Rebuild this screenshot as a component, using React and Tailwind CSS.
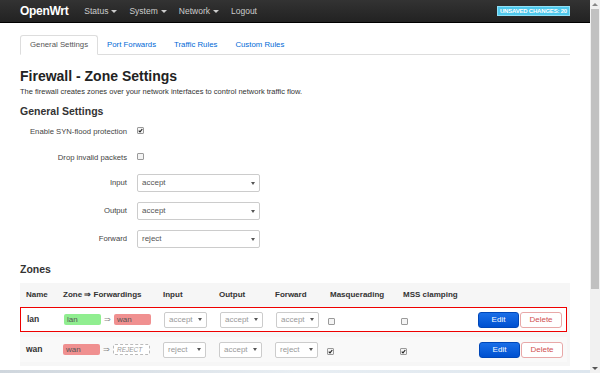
import React from "react";

const font = { fontFamily: '"Liberation Sans", Arial, sans-serif' };

function Caret() {
  return <span className="inline-block ml-[3px] align-middle border-t-[3px] border-t-current border-x-[3px] border-x-transparent w-0 h-0" />;
}

function Check({ checked }) {
  return (
    <span className="inline-flex items-center justify-center w-[7px] h-[7px] border border-[#9a9a9a] rounded-[1px] bg-[#f4f4f4]">
      {checked && (
        <svg width="7" height="7" viewBox="0 0 7 7">
          <path d="M1 3.6 L2.8 5.4 L6 1.4" stroke="#222" strokeWidth="1.6" fill="none" />
        </svg>
      )}
    </span>
  );
}

function Select({ value, className = "", muted }) {
  return (
    <div className={`flex items-center justify-between border border-[#ccc] rounded-[2px] bg-white px-[4px] text-[8px] ${muted ? "text-[#999]" : "text-[#555]"} ${className}`}>
      <span>{value}</span>
      <span className="inline-block border-t-[3px] border-t-[#555] border-x-[2px] border-x-transparent w-0 h-0" />
    </div>
  );
}

function Row({ name, zone, zoneColor, fwd, fwdColor, reject, vals, masq, mss, highlight }) {
  return (
    <div className={`flex items-center h-[25px] ${highlight ? "border border-[#e00] bg-white" : "bg-[#f9f9f9] mt-[5px]"}`}>
      <div className="w-[43px] pl-[6px] text-[8.5px] font-bold text-[#333]">{name}</div>
      <div className="w-[100px] flex items-center">
        <span className={`w-[37px] h-[11px] rounded-[2px] ${zoneColor} text-[8px] text-[#555] px-[3px] leading-[11px]`}>{zone}</span>
        <span className="mx-[3px] text-[8px] text-[#888]">⇒</span>
        {reject ? (
          <span className="w-[37px] h-[11px] rounded-[2px] border border-dashed border-[#bbb] bg-white text-[6.5px] italic text-[#999] px-[3px] leading-[9px]">REJECT</span>
        ) : (
          <span className={`w-[37px] h-[11px] rounded-[2px] ${fwdColor} text-[8px] text-[#555] px-[3px] leading-[11px]`}>{fwd}</span>
        )}
      </div>
      <div className="flex gap-[13px]">
        {vals.map((v, i) => (
          <Select key={i} value={v} muted className="w-[43px] h-[16px]" />
        ))}
      </div>
      <div className="w-[72px] pl-[9px]"><Check checked={masq} /></div>
      <div className="w-[70px] pl-[10px]"><Check checked={mss} /></div>
      <div className="flex-1 flex justify-end pr-[4px] gap-[1px]">
        <div className="w-[41px] h-[16px] rounded-[3px] bg-gradient-to-b from-[#1a6fe8] to-[#0050d0] border border-[#0047b8] text-white text-[8px] flex items-center justify-center">Edit</div>
        <div className="w-[42px] h-[16px] rounded-[3px] bg-white border border-[#e8a8a8] text-[#d05050] text-[8px] flex items-center justify-center">Delete</div>
      </div>
    </div>
  );
}

export default function App() {
  return (
    <div className="w-[600px] h-[373px] overflow-hidden flex bg-white" style={font}>
      <div className="flex-1 flex flex-col">
        <div className="h-[23px] bg-gradient-to-b from-[#333] to-[#222] border-b border-black flex items-center pl-[20px] pr-[20px]">
          <span className="text-white text-[12px] font-bold mr-[16px] tracking-[-0.3px]">OpenWrt</span>
          <div className="flex gap-[12px] text-[8.5px] text-[#ccc]">
            <span>Status<Caret /></span>
            <span>System<Caret /></span>
            <span>Network<Caret /></span>
            <span>Logout</span>
          </div>
          <div className="ml-auto h-[10px] px-[2px] bg-[#4fc8ec] border border-[#8fe0f7] text-white text-[6px] font-bold leading-[8px] tracking-[-0.2px]">UNSAVED CHANGES: 20</div>
        </div>
        <div className="px-[20px]">
          <div className="mt-[12px] flex border-b border-[#ddd] h-[20px] text-[7.8px]">
            <div className="px-[9px] border border-[#ddd] border-b-white rounded-t-[3px] bg-white text-[#555] flex items-center -mb-px">General Settings</div>
            <div className="px-[9px] text-[#0069d6] flex items-center">Port Forwards</div>
            <div className="px-[9px] text-[#0069d6] flex items-center">Traffic Rules</div>
            <div className="px-[9px] text-[#0069d6] flex items-center">Custom Rules</div>
          </div>
          <h1 className="mt-[12px] text-[14px] font-bold text-[#222] leading-[18px]">Firewall - Zone Settings</h1>
          <p className="mt-[1px] text-[7.5px] text-[#333]">The firewall creates zones over your network interfaces to control network traffic flow.</p>
          <h3 className="mt-[7px] text-[10.5px] font-bold text-[#333] leading-[15px]">General Settings</h3>
          <div className="mt-[5px] flex flex-col text-[7.7px] text-[#444]">
            <div className="flex items-center h-[16px]">
              <div className="w-[107px] text-right whitespace-nowrap">Enable SYN-flood protection</div>
              <div className="ml-[10px]"><Check checked /></div>
            </div>
            <div className="flex items-center h-[16px] mt-[10px]">
              <div className="w-[107px] text-right whitespace-nowrap">Drop invalid packets</div>
              <div className="ml-[10px]"><Check /></div>
            </div>
            {[["Input", "accept"], ["Output", "accept"], ["Forward", "reject"]].map(([l, v], i) => (
              <div key={l} className={`flex items-center h-[18px] ${i === 0 ? "mt-[8px]" : "mt-[10px]"}`}>
                <div className="w-[107px] text-right">{l}</div>
                <Select value={v} className="ml-[10px] w-[123px] h-[18px]" />
              </div>
            ))}
          </div>
          <h3 className="mt-[14px] text-[10.5px] font-bold text-[#333] leading-[15px]">Zones</h3>
          <div className="mt-[6px] w-[550px] bg-[#f6f6f6] pb-[4px]">
            <div className="flex items-center h-[24px] text-[8px] font-bold text-[#333]">
              <div className="w-[43px] pl-[6px]">Name</div>
              <div className="w-[100px]">Zone ⇒ Forwardings</div>
              <div className="w-[56px]">Input</div>
              <div className="w-[56px]">Output</div>
              <div className="w-[55px]">Forward</div>
              <div className="w-[73px]">Masquerading</div>
              <div>MSS clamping</div>
            </div>
            <div className="pr-[3px]">
              <Row name="lan" zone="lan" zoneColor="bg-[#90ee90]" fwd="wan" fwdColor="bg-[#f09090]" vals={["accept", "accept", "accept"]} highlight />
              <Row name="wan" zone="wan" zoneColor="bg-[#f09090]" reject vals={["reject", "accept", "reject"]} masq mss />
            </div>
          </div>
        </div>
        <div className="mt-auto h-[3px] bg-gradient-to-r from-[#cfd6dd] via-[#e8eef3] to-[#dde6ee]" />
      </div>
      <div className="w-[10px] bg-[#f1f1f1] flex flex-col items-center">
        <div className="h-[9px] flex items-center justify-center">
          <span className="border-b-[3px] border-b-[#888] border-x-[3px] border-x-transparent w-0 h-0" />
        </div>
        <div className="w-[8px] h-[280px] bg-[#c1c1c1]" />
        <div className="mt-auto h-[9px] flex items-center justify-center">
          <span className="border-t-[3px] border-t-[#555] border-x-[3px] border-x-transparent w-0 h-0" />
        </div>
      </div>
    </div>
  );
}
